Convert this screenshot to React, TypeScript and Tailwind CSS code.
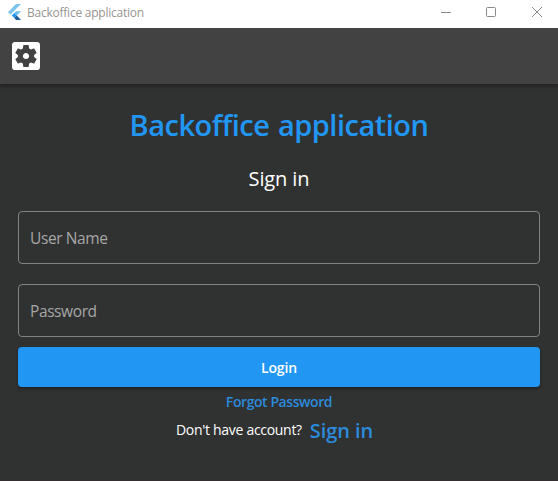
import React from "react";
import { MdSettingsApplications } from "react-icons/md";

function FlutterLogo() {
  return (
    <svg width="13" height="16" viewBox="0 0 13 16" className="block">
      <path d="M0 8.2 8 0h5L2.5 10.6z" fill="#7cc4ee" />
      <path d="M8 7.3h5L8.7 11.6 6.2 9.1z" fill="#6bbcec" />
      <path d="M3.8 11.6 6.3 9.1l2.5 2.5-2.5 2.5z" fill="#2196f3" />
      <path d="M6.3 14.1 8.8 11.6 13 16H8.1z" fill="#1f5b95" />
    </svg>
  );
}

function TitleBar() {
  return (
    <div className="relative z-10 flex h-7 shrink-0 items-center bg-white pl-2">
      <div className="-mt-1">
        <FlutterLogo />
      </div>
      <span className="-mt-[2px] ml-[6px] text-xs leading-4 tracking-[-0.24px] text-[#999590]">Backoffice application</span>
      <svg width="105" height="12" viewBox="0 0 105 12" className="mt-[-4px] mr-[14px] ml-auto" fill="none" stroke="#8a8a8a">
        <path d="M2 6.5h10" />
        <rect x="47.5" y="1.5" width="9" height="9" rx="1" />
        <path d="m93 1 10 10M103 1 93 11" />
      </svg>
    </div>
  );
}

function Field({ label }: { label: string }) {
  return (
    <div className="flex h-[53px] items-center rounded-[4px] border border-[#818282] pl-[11px] text-[15.5px] text-[#a6a7a7]">
      <span className="leading-6 tracking-[-0.4px]">{label}</span>
    </div>
  );
}

export default function App() {
  return (
    <div className="flex h-[481px] w-[558px] flex-col overflow-hidden bg-[#303131] font-['Open_Sans','Noto_Sans',sans-serif] text-white">
      <TitleBar />
      <header className="flex h-14 shrink-0 items-center bg-[#424242] pl-3 shadow-[0_1px_5px_1px_rgba(0,0,0,0.35)]">
        <MdSettingsApplications viewBox="3 3 18 18" size={28} color="#fff" />
      </header>
      <main className="flex flex-col px-[18px] pt-[21px]">
        <h1 className="text-center text-[29px] leading-10 font-semibold tracking-[-0.5px] text-[#2196f3] [word-spacing:1.5px]">Backoffice application</h1>
        <h2 className="mt-5 text-center text-xl leading-7 tracking-[-0.1px]">Sign in</h2>
        <div className="mt-[18px] flex flex-col gap-5">
          <Field label="User Name" />
          <Field label="Password" />
        </div>
        <button className="mt-[10px] h-10 rounded-[4px] bg-[#2196f3] pt-[2px] text-sm font-semibold tracking-[-0.15px] shadow-[0_2px_3px_rgba(0,0,0,0.35)]">Login</button>
        <a className="mt-[5px] text-center text-sm leading-5 font-semibold tracking-[-0.42px] text-[#2b8bdc]">Forgot Password</a>
        <div className="mt-[5px] flex items-center justify-center gap-2 pr-[9px]">
          <span className="-mt-[2px] text-sm leading-5 tracking-[-0.3px]">Don't have account?</span>
          <a className="text-xl leading-7 font-semibold tracking-[-0.1px] text-[#2b8bdc]">Sign in</a>
        </div>
      </main>
      <div className="mt-auto h-px bg-[#352e30]" />
    </div>
  );
}
